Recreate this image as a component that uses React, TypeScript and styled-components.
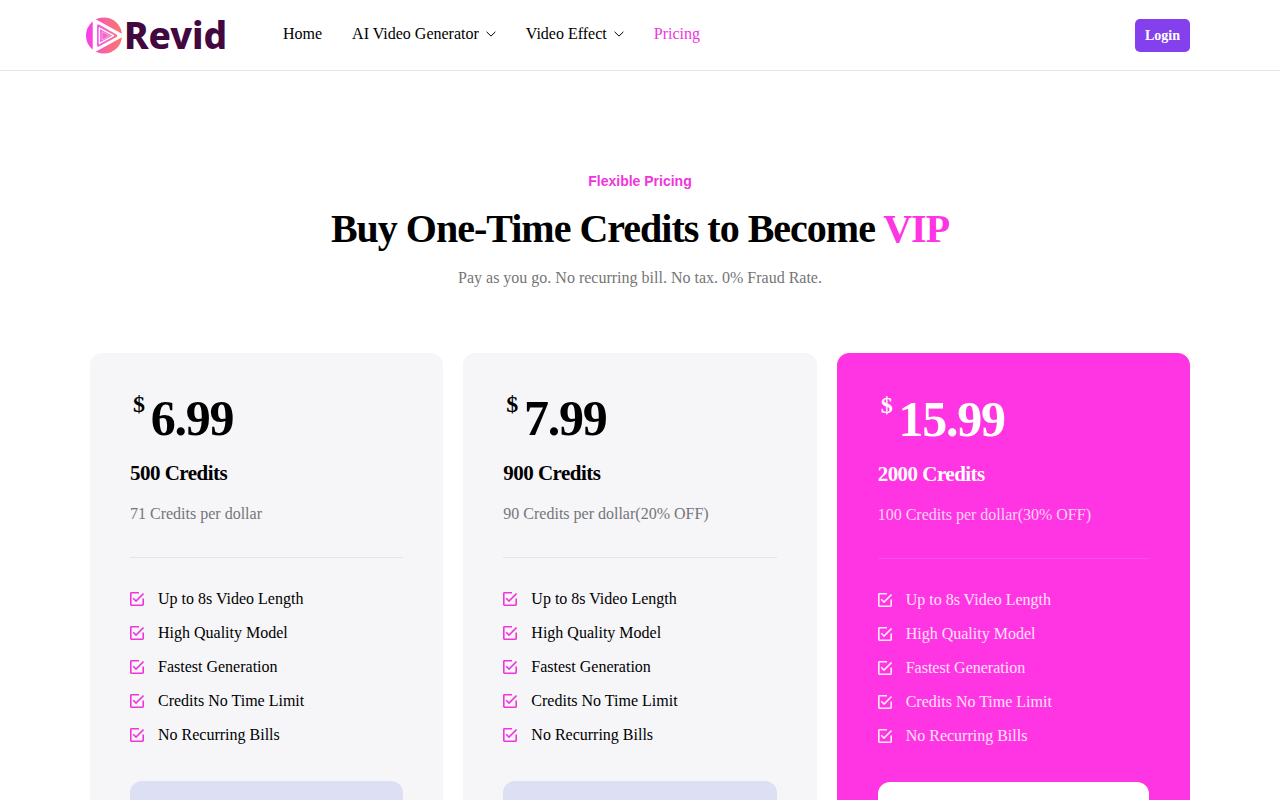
import React from "react";
import styled, { createGlobalStyle } from "styled-components";

const PINK = "#ff35e3";
const LINK_PINK = "#f035dc";

const GlobalStyle = createGlobalStyle`
  *, *::before, *::after { box-sizing: border-box; }
  body {
    margin: 0;
    background: #fff;
    color: #000;
    font-family: "Liberation Serif", "Times New Roman", serif;
    font-size: 16px;
    line-height: 24px;
  }
  h1, h2, p, ul { margin: 0; padding: 0; }
  ul { list-style: none; }
`;

const Header = styled.header`
  border-bottom: 1px solid #e5e5e5;
`;

const HeaderInner = styled.div`
  display: flex;
  align-items: center;
  max-width: 1108px;
  height: 70px;
  margin: 0 auto;
  padding: 0 4px 0 0;
`;

const Logo = styled.a`
  display: flex;
  align-items: center;
  gap: 1px;
  width: 197px;
  color: #43083f;
  font-family: "Noto Sans", sans-serif;
  font-size: 37px;
  font-weight: 800;
  line-height: 40px;
  text-decoration: none;
`;

const LogoMark = styled.svg`
  flex: none;
  width: 37px;
  height: 37px;
`;

const Nav = styled.nav`
  display: flex;
  flex: 1;
  gap: 30px;
  padding-bottom: 2px;
`;

const NavLink = styled.a<{ $active?: boolean }>`
  display: inline-flex;
  align-items: center;
  gap: 7px;
  color: ${(p) => (p.$active ? LINK_PINK : "#000")};
  text-decoration: none;
`;

const LoginButton = styled.button`
  height: 33px;
  padding: 2px 10px 0;
  border: 0;
  border-radius: 5px;
  background: #8540ee;
  color: #fff;
  font-family: inherit;
  font-size: 14px;
  font-weight: 700;
  cursor: pointer;
`;

const Main = styled.main`
  max-width: 1100px;
  margin: 0 auto;
  padding: 98px 0 80px;
`;

const Intro = styled.section`
  display: flex;
  flex-direction: column;
  align-items: center;
  text-align: center;
`;

const Eyebrow = styled.p`
  color: ${LINK_PINK};
  font-family: "Liberation Sans", Arial, sans-serif;
  font-size: 14px;
  font-weight: 700;
`;

const Title = styled.h1`
  margin-top: 12px;
  font-size: 40px;
  font-weight: 700;
  line-height: 48px;
  letter-spacing: -0.025em;
`;

const Accent = styled.span`
  color: ${PINK};
`;

const Lead = styled.p`
  margin-top: 13px;
  color: #757575;
`;

const Plans = styled.section`
  display: grid;
  grid-template-columns: repeat(3, minmax(0, 1fr));
  gap: 20px;
  margin-top: 63px;
`;

const Card = styled.article<{ $featured?: boolean }>`
  display: flex;
  flex-direction: column;
  padding: 40px;
  border: ${(p) => (p.$featured ? `1px solid ${PINK}` : "0")};
  border-radius: 12px;
  background: ${(p) => (p.$featured ? PINK : "#f6f6f9")};
  color: ${(p) => (p.$featured ? "#fff" : "#000")};
`;

const Price = styled.p`
  display: flex;
  align-items: flex-start;
  gap: 7px;
  padding-left: 3px;
  font-size: 50px;
  font-weight: 700;
  line-height: 50px;
  letter-spacing: -0.025em;
`;

const Currency = styled.span`
  font-size: 24px;
  line-height: 22px;
`;

const Credits = styled.h2`
  margin-top: 18px;
  font-size: 21px;
  font-weight: 700;
  line-height: 24px;
  letter-spacing: -0.025em;
`;

const Rate = styled.p<{ $featured?: boolean }>`
  margin-top: 17px;
  padding-bottom: 31px;
  border-bottom: 1px solid ${(p) => (p.$featured ? "#ff4be6" : "#e5e5e8")};
  color: ${(p) => (p.$featured ? "#ffd3f9" : "#757577")};
`;

const Features = styled.ul`
  display: flex;
  flex-direction: column;
  gap: 10px;
  margin-top: 29px;
`;

const Feature = styled.li<{ $featured?: boolean }>`
  display: flex;
  align-items: center;
  gap: 14px;
  color: ${(p) => (p.$featured ? "#ffe3fb" : "#000")};
`;

const CheckSvg = styled.svg<{ $featured?: boolean }>`
  flex: none;
  width: 14px;
  height: 14px;
  color: ${(p) => (p.$featured ? "#ffeafc" : LINK_PINK)};
`;

const BuyButton = styled.button<{ $featured?: boolean }>`
  height: 64px;
  margin-top: 34px;
  border: 0;
  border-radius: 12px;
  background: ${(p) => (p.$featured ? "#fff" : "#dde0f5")};
  color: #000;
  font-family: inherit;
  font-size: 16px;
  font-weight: 700;
  cursor: pointer;
`;

const Chevron = () => (
  <svg width="10" height="6" viewBox="0 0 10 6" fill="none" stroke="currentColor" strokeWidth="1" aria-hidden="true">
    <path d="M.6.8 5 5.1 9.4.8" />
  </svg>
);

const Check = ({ featured }: { featured?: boolean }) => (
  <CheckSvg $featured={featured} viewBox="0 0 14 14" fill="none" stroke="currentColor" strokeWidth="1.6" aria-hidden="true">
    <path d="M9 .8H1.4a.6.6 0 0 0-.6.6v11.200c0 .3.3.6.6.6h11.200c.3 0 .6-.3.6-.6V6.500" />
    <path d="M3.200 6.200 6 9 13.500 1.600" />
  </CheckSvg>
);

const Mark = () => (
  <LogoMark viewBox="0 0 37 37" aria-hidden="true">
    <defs>
      <linearGradient id="disc" gradientUnits="userSpaceOnUse" x1="0" y1="0" x2="37" y2="0">
        <stop offset="0" stopColor="#f83cf0" />
        <stop offset=".2" stopColor="#f94ad0" />
        <stop offset=".5" stopColor="#f9639f" />
        <stop offset="1" stopColor="#fb7568" />
      </linearGradient>
      <linearGradient id="play" x1="0" y1="0" x2="1" y2="0">
        <stop offset="0" stopColor="#f05cf0" />
        <stop offset="1" stopColor="#fa7088" />
      </linearGradient>
    </defs>
    <circle cx="18" cy="18.5" r="18" fill="url(#disc)" />
    <path d="M9 4.500v28L34.500 18.500Z" fill="#fff" stroke="#fff" strokeWidth="4.500" strokeLinejoin="round" />
    <path d="M11 8.500v20c0 1 1 1.500 2 1L30.500 20c1-.6 1-2 0-2.600L13 7.600c-1-.5-2 0-2 .9Z" fill="url(#play)" />
    <path d="M13.400 11v15.500L27.500 18.700Z" fill="none" stroke="#fff" strokeWidth="1.400" strokeLinejoin="round" />
    <path d="M16 14.500v8.500l7.500-4.300Z" fill="none" stroke="#fff" strokeOpacity=".4" strokeWidth="1" strokeLinejoin="round" />
  </LogoMark>
);

const features = [
  "Up to 8s Video Length",
  "High Quality Model",
  "Fastest Generation",
  "Credits No Time Limit",
  "No Recurring Bills",
];

const plans = [
  { price: "6.99", credits: "500 Credits", rate: "71 Credits per dollar", featured: false },
  { price: "7.99", credits: "900 Credits", rate: "90 Credits per dollar(20% OFF)", featured: false },
  { price: "15.99", credits: "2000 Credits", rate: "100 Credits per dollar(30% OFF)", featured: true },
];

export default function App() {
  return (
    <>
      <GlobalStyle />
      <Header>
        <HeaderInner>
          <Logo href="#home">
            <Mark />
            Revid
          </Logo>
          <Nav>
            <NavLink href="#home">Home</NavLink>
            <NavLink href="#generator">
              AI Video Generator
              <Chevron />
            </NavLink>
            <NavLink href="#effect">
              Video Effect
              <Chevron />
            </NavLink>
            <NavLink href="#pricing" $active aria-current="page">
              Pricing
            </NavLink>
          </Nav>
          <LoginButton type="button">Login</LoginButton>
        </HeaderInner>
      </Header>
      <Main>
        <Intro>
          <Eyebrow>Flexible Pricing</Eyebrow>
          <Title>
            Buy One-Time Credits to Become <Accent>VIP</Accent>
          </Title>
          <Lead>Pay as you go. No recurring bill. No tax. 0% Fraud Rate.</Lead>
        </Intro>
        <Plans>
          {plans.map((plan) => (
            <Card key={plan.price} $featured={plan.featured}>
              <Price>
                <Currency>$</Currency>
                {plan.price}
              </Price>
              <Credits>{plan.credits}</Credits>
              <Rate $featured={plan.featured}>{plan.rate}</Rate>
              <Features>
                {features.map((text) => (
                  <Feature key={text} $featured={plan.featured}>
                    <Check featured={plan.featured} />
                    {text}
                  </Feature>
                ))}
              </Features>
              <BuyButton type="button" $featured={plan.featured}>
                Buy Now
              </BuyButton>
            </Card>
          ))}
        </Plans>
      </Main>
    </>
  );
}
